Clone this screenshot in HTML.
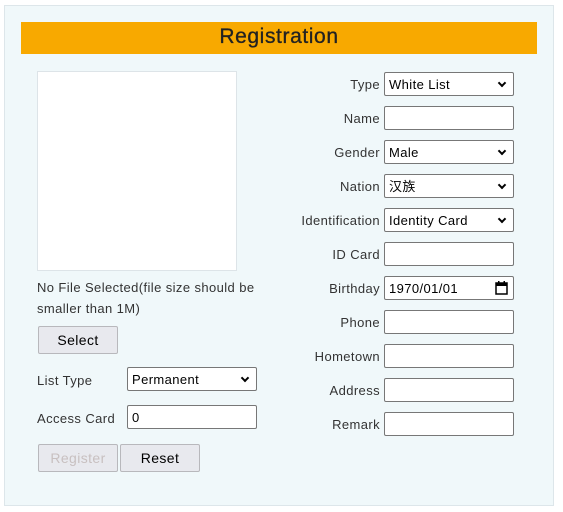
<!DOCTYPE html>
<html><head><style>
body{margin:0;width:563px;height:512px;background:#fff;font-family:"Liberation Sans","Noto Sans CJK SC",sans-serif;font-size:13px;letter-spacing:0.4px;color:#333;position:relative;overflow:hidden}
.a{position:absolute}
.panel{left:4px;top:5px;width:548px;height:499px;background:#f0f8fa;border:1px solid #dde6ea}
.hdr{left:21px;top:22px;width:516px;height:32px;background:#f8a900;text-align:center;font-size:21px;line-height:30px;color:#222;letter-spacing:0.6px;-webkit-text-stroke:0.3px #222}
.img{left:37px;top:71px;width:198px;height:198px;background:#fff;border:1px solid #dde4e8}
.lbl{text-align:right;width:120px;left:260px;line-height:26px}
.in{background:#fff;border:1px solid #777;border-radius:2px;line-height:24px;padding-left:4px;box-sizing:border-box;height:24px;color:#000}
.sel::after{content:"";position:absolute;right:8px;top:7px;width:4px;height:4px;border-right:2px solid #000;border-bottom:2px solid #000;transform:rotate(45deg)}
.btn{background:#e8e9ee;border:1px solid #b8b8bc;border-radius:2px;text-align:center;line-height:27px;font-size:14px;height:28px;box-sizing:border-box;color:#000}
</style></head><body>
<div class="a panel"></div>
<div class="a hdr">Registration</div>
<div class="a img"></div>
<div class="a" style="left:37px;top:277px;width:235px;line-height:21px">No File Selected(file size should be smaller than 1M)</div>
<div class="a btn" style="left:38px;top:326px;width:80px">Select</div>
<div class="a" style="left:37px;top:368px;line-height:26px">List Type</div>
<div class="a in sel" style="left:127px;top:367px;width:130px">Permanent</div>
<div class="a" style="left:37px;top:406px;line-height:26px">Access Card</div>
<div class="a in" style="left:127px;top:405px;width:130px">0</div>
<div class="a btn" style="left:38px;top:444px;width:80px;color:#c8c0c0">Register</div>
<div class="a btn" style="left:120px;top:444px;width:80px">Reset</div>

<div class="a lbl" style="top:72px">Type</div><div class="a in sel" style="left:384px;top:72px;width:130px">White List</div>
<div class="a lbl" style="top:106px">Name</div><div class="a in" style="left:384px;top:106px;width:130px"></div>
<div class="a lbl" style="top:140px">Gender</div><div class="a in sel" style="left:384px;top:140px;width:130px">Male</div>
<div class="a lbl" style="top:174px">Nation</div><div class="a in sel" style="left:384px;top:174px;width:130px">汉族</div>
<div class="a lbl" style="top:208px">Identification</div><div class="a in sel" style="left:384px;top:208px;width:130px">Identity Card</div>
<div class="a lbl" style="top:242px">ID Card</div><div class="a in" style="left:384px;top:242px;width:130px"></div>
<div class="a lbl" style="top:276px">Birthday</div><div class="a in" style="left:384px;top:276px;width:130px">1970/01/01
<svg class="a" style="right:5px;top:4px" width="13" height="14" viewBox="0 0 13 14"><rect x="1" y="2" width="11" height="11" fill="none" stroke="#000" stroke-width="1.5"/><rect x="1" y="2" width="11" height="3" fill="#000"/><rect x="3" y="0" width="1.5" height="3" fill="#000"/><rect x="8.5" y="0" width="1.5" height="3" fill="#000"/></svg></div>
<div class="a lbl" style="top:310px">Phone</div><div class="a in" style="left:384px;top:310px;width:130px"></div>
<div class="a lbl" style="top:344px">Hometown</div><div class="a in" style="left:384px;top:344px;width:130px"></div>
<div class="a lbl" style="top:378px">Address</div><div class="a in" style="left:384px;top:378px;width:130px"></div>
<div class="a lbl" style="top:412px">Remark</div><div class="a in" style="left:384px;top:412px;width:130px"></div>
</body></html>
